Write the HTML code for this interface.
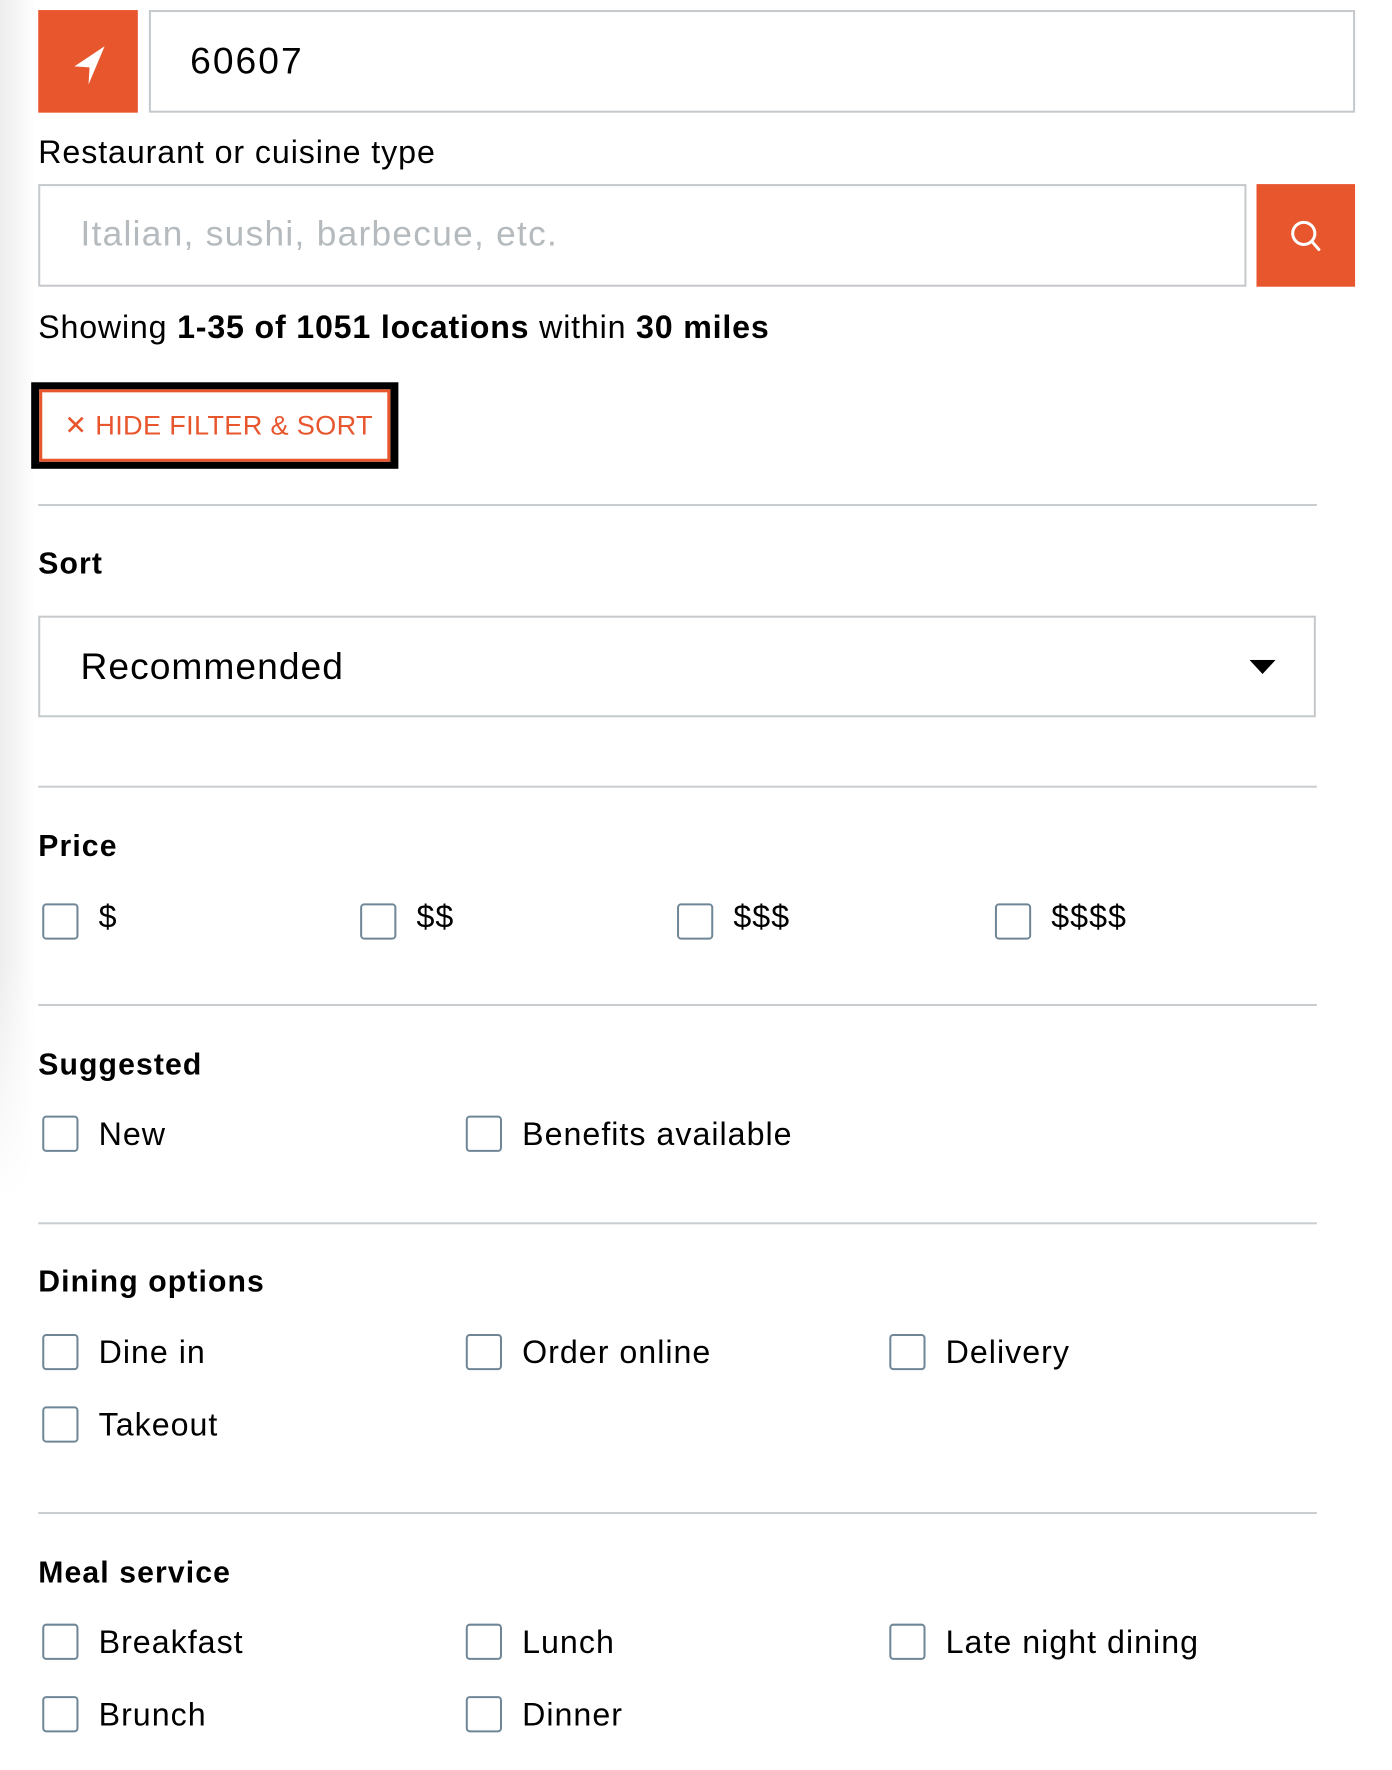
<!DOCTYPE html>
<html><head><meta charset="utf-8"><style>
*{box-sizing:border-box;margin:0;padding:0}
html,body{width:1392px;height:1770px;background:#fff;overflow:hidden}
body{font-family:"Liberation Sans",Arial,sans-serif;color:#000;position:relative}
#w{position:absolute;left:0;top:0;width:1392px;height:1770px;transform:scale(1.006);transform-origin:0 0}
.shadow{position:absolute;left:0;top:0;width:36px;height:1200px;background:linear-gradient(to right,rgba(0,0,0,0.07),rgba(0,0,0,0));-webkit-mask-image:linear-gradient(to bottom,#000 80%,transparent);}
.abs{position:absolute}
.orange{background:#e8562e}
.inp{border:2px solid #c5c9cc;background:#fff}
.hr{position:absolute;left:38px;width:1271px;height:2px;background:#c9cdd0}
.h{position:absolute;left:38px;font-weight:bold;font-size:30px;line-height:34px;letter-spacing:1.1px}
.cb{position:absolute;width:36px;height:36px;border:2.5px solid #6e8696;border-radius:4px;background:#fff}
.lb{position:absolute;font-size:32px;line-height:36px;letter-spacing:1px;margin-top:1px}
</style></head><body>
<div class="shadow"></div>
<div id="w">
<div class="abs orange" style="left:38px;top:10px;width:99px;height:102px">
<svg width="99" height="102" viewBox="0 0 99 102"><path d="M66 36 L36 56 L51 57 L50 74 Z" fill="#fff"/></svg>
</div>
<div class="abs inp" style="left:148px;top:10px;width:1199px;height:102px"></div>
<div class="abs" style="left:189px;top:40px;font-size:37px;line-height:42px;letter-spacing:2px">60607</div>
<div class="abs" style="left:38px;top:133px;font-size:32px;line-height:36px;letter-spacing:0.9px">Restaurant or cuisine type</div>
<div class="abs inp" style="left:38px;top:183px;width:1201px;height:102px"></div>
<div class="abs" style="left:80px;top:213px;font-size:35px;line-height:40px;letter-spacing:1.3px;color:#b4babd">Italian, sushi, barbecue, etc.</div>
<div class="abs orange" style="left:1249px;top:183px;width:98px;height:102px">
<svg width="98" height="102" viewBox="0 0 98 102"><circle cx="47" cy="49" r="11" fill="none" stroke="#fff" stroke-width="3"/><path d="M55 57 L62 65" stroke="#fff" stroke-width="3" stroke-linecap="round"/></svg>
</div>
<div class="abs" style="left:38px;top:307px;font-size:32px;line-height:36px;letter-spacing:0.8px">Showing <b>1-35 of 1051 locations</b> within <b>30 miles</b></div>
<div class="abs" style="left:31px;top:380px;width:365px;height:86px;background:#000"></div>
<div class="abs" style="left:39px;top:387px;width:349px;height:72px;background:#fff;border:3px solid #e8562e"></div>
<div class="abs" style="left:64px;top:406px;font-size:27px;line-height:34px;letter-spacing:0.3px;color:#e8562e">✕ HIDE FILTER &amp; SORT</div>
<div class="hr" style="top:501px"></div>
<div class="h" style="top:544px">Sort</div>
<div class="abs inp" style="left:38px;top:612px;width:1270px;height:101px"></div>
<div class="abs" style="left:80px;top:642px;font-size:37px;line-height:42px;letter-spacing:1px">Recommended</div>
<svg class="abs" style="left:1242px;top:656px" width="26" height="16"><path d="M0 0 L26 0 L13 14 Z" fill="#000"/></svg>
<div class="hr" style="top:781px"></div>
<div class="h" style="top:825px">Price</div>
<div class="cb" style="left:42px;top:898px"></div><div class="lb" style="left:98px;top:892px">$</div>
<div class="cb" style="left:358px;top:898px"></div><div class="lb" style="left:414px;top:892px">$$</div>
<div class="cb" style="left:673px;top:898px"></div><div class="lb" style="left:729px;top:892px">$$$</div>
<div class="cb" style="left:989px;top:898px"></div><div class="lb" style="left:1045px;top:892px">$$$$</div>
<div class="hr" style="top:998px"></div>
<div class="h" style="top:1042px">Suggested</div>
<div class="cb" style="left:42px;top:1109px"></div><div class="lb" style="left:98px;top:1108px">New</div>
<div class="cb" style="left:463px;top:1109px"></div><div class="lb" style="left:519px;top:1108px">Benefits available</div>
<div class="hr" style="top:1215px"></div>
<div class="h" style="top:1258px">Dining options</div>
<div class="cb" style="left:42px;top:1326px"></div><div class="lb" style="left:98px;top:1325px">Dine in</div>
<div class="cb" style="left:463px;top:1326px"></div><div class="lb" style="left:519px;top:1325px">Order online</div>
<div class="cb" style="left:884px;top:1326px"></div><div class="lb" style="left:940px;top:1325px">Delivery</div>
<div class="cb" style="left:42px;top:1398px"></div><div class="lb" style="left:98px;top:1397px">Takeout</div>
<div class="hr" style="top:1503px"></div>
<div class="h" style="top:1547px">Meal service</div>
<div class="cb" style="left:42px;top:1614px"></div><div class="lb" style="left:98px;top:1613px">Breakfast</div>
<div class="cb" style="left:463px;top:1614px"></div><div class="lb" style="left:519px;top:1613px">Lunch</div>
<div class="cb" style="left:884px;top:1614px"></div><div class="lb" style="left:940px;top:1613px">Late night dining</div>
<div class="cb" style="left:42px;top:1686px"></div><div class="lb" style="left:98px;top:1685px">Brunch</div>
<div class="cb" style="left:463px;top:1686px"></div><div class="lb" style="left:519px;top:1685px">Dinner</div>
</div>
</body></html>
